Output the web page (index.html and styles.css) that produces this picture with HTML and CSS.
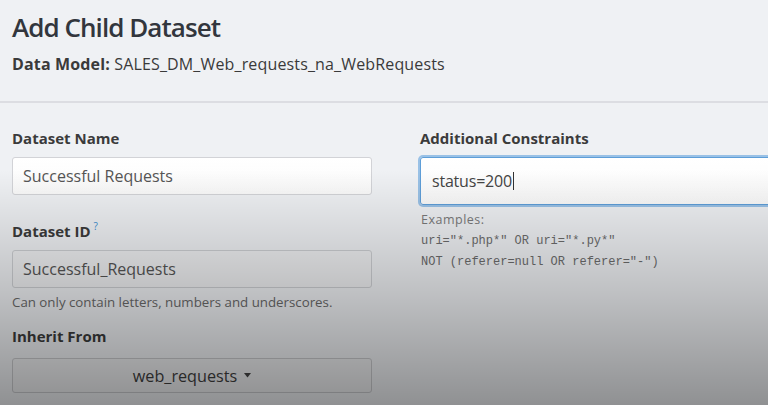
FILE: index.html
```html
<!DOCTYPE html>
<html>
<head>
<meta charset="utf-8">
<link rel="stylesheet" href="styles.css">
</head>
<body>
<div class="page">
  <header class="header">
    <h1 class="title">Add Child Dataset</h1>
    <p class="model"><b>Data Model:</b> SALES_DM_Web_requests_na_WebRequests</p>
  </header>
  <div class="form">
    <div class="col">
      <div class="field">
        <label class="label">Dataset Name</label>
        <div class="input">Successful Requests</div>
      </div>
      <div class="field">
        <label class="label">Dataset ID<sup class="help">?</sup></label>
        <div class="input disabled">Successful_Requests</div>
        <p class="hint">Can only contain letters, numbers and underscores.</p>
      </div>
      <div class="field field-inherit">
        <label class="label">Inherit From</label>
        <div class="select">web_requests <svg class="caret-down" width="7" height="5" viewBox="0 0 7 5"><path d="M0 0H7L3.5 4.5Z" fill="#444"/></svg></div>
      </div>
    </div>
    <div class="col">
      <div class="field">
        <label class="label">Additional Constraints</label>
        <div class="input focus">status=200<span class="cursor"></span></div>
        <div class="examples">
          <p class="ex-title">Examples:</p>
          <p class="code">uri="*.php*" OR uri="*.py*"</p>
          <p class="code">NOT (referer=null OR referer="-")</p>
        </div>
      </div>
    </div>
  </div>
  <div class="shade"></div>
</div>
</body>
</html>
```
FILE: styles.css
```css
html, body {
  margin: 0;
  height: 100%;
  overflow: hidden;
}
body {
  background: #eff1f4;
  font-family: "Open Sans", "Liberation Sans", sans-serif;
  color: #333;
}
.page {
  position: relative;
  height: 405px;
  width: 800px;
}
.header {
  padding: 10px 12px 0;
  height: 91px;
  border-bottom: 2px solid #dcdde2;
}
.title {
  margin: 0;
  font-size: 26px;
  line-height: 34px;
  font-weight: 600;
  color: #32363d;
  letter-spacing: -0.95px;
}
.model {
  margin: 10px 0 0;
  font-size: 16px;
  line-height: 20px;
  color: #3a3a3a;
  letter-spacing: 0.15px;
}
.model b {
  font-weight: 700;
}
.form {
  display: grid;
  grid-template-columns: 360px 360px;
  column-gap: 48px;
  padding: 25px 12px 0;
}
.field {
  display: flex;
  flex-direction: column;
}
.label {
  font-size: 15px;
  line-height: 20px;
  font-weight: 700;
  color: #3b3b3b;
  margin-bottom: 9px;
}
.help {
  color: #3d8fd1;
  font-size: 10px;
  font-weight: 400;
  margin-left: 3px;
  vertical-align: 7px;
  line-height: 0;
}
.input {
  box-sizing: border-box;
  height: 38px;
  border: 1px solid #d2d3d7;
  border-radius: 3px;
  background: linear-gradient(#ffffff, #fafafa);
  padding: 0 10px;
  display: flex;
  align-items: center;
  font-size: 16px;
  color: #555;
}
.input.disabled {
  background: #eff0f2;
  border-color: #cdcfd3;
}
.input.focus {
  height: 48px;
  border: 1px solid #5e9ed8;
  box-shadow: 0 0 0 2px rgba(124, 176, 226, 0.75);
  font-size: 16px;
  color: #444;
  padding-left: 11px;
  letter-spacing: -0.2px;
}
.cursor {
  display: inline-block;
  width: 1px;
  height: 18px;
  background: #333;
  margin-left: 1px;
}
.field + .field {
  margin-top: 26px;
}
.field.field-inherit {
  margin-top: 15px;
}
.field-inherit .label {
  margin-bottom: 12px;
}
.hint {
  margin: 6px 0 0;
  font-size: 13.3px;
  line-height: 17px;
  color: #6a6a6a;
}
.select {
  box-sizing: border-box;
  height: 35px;
  border: 1px solid #c9cacd;
  border-radius: 3px;
  background: #eeeff1;
  display: flex;
  align-items: center;
  justify-content: center;
  gap: 7px;
  font-size: 16.2px;
  color: #3e3e3e;
}
.examples {
  margin-top: 6px;
  padding-left: 1px;
}
.ex-title {
  margin: 0;
  font-size: 12.5px;
  line-height: 18px;
  letter-spacing: 0.5px;
  color: #7a7a7a;
}
.code {
  margin: 3px 0 0;
  font-family: "Liberation Mono", "DejaVu Sans Mono", monospace;
  font-size: 12px;
  line-height: 18px;
  color: #6c6c6c;
}
.shade {
  position: absolute;
  left: 0;
  top: 0;
  width: 100%;
  height: 100%;
  pointer-events: none;
  background: linear-gradient(to bottom, rgba(0,0,0,0) 0%, rgba(0,0,0,0) 42%, rgba(0,0,0,0.2) 72%, rgba(0,0,0,0.4) 100%);
}
```
